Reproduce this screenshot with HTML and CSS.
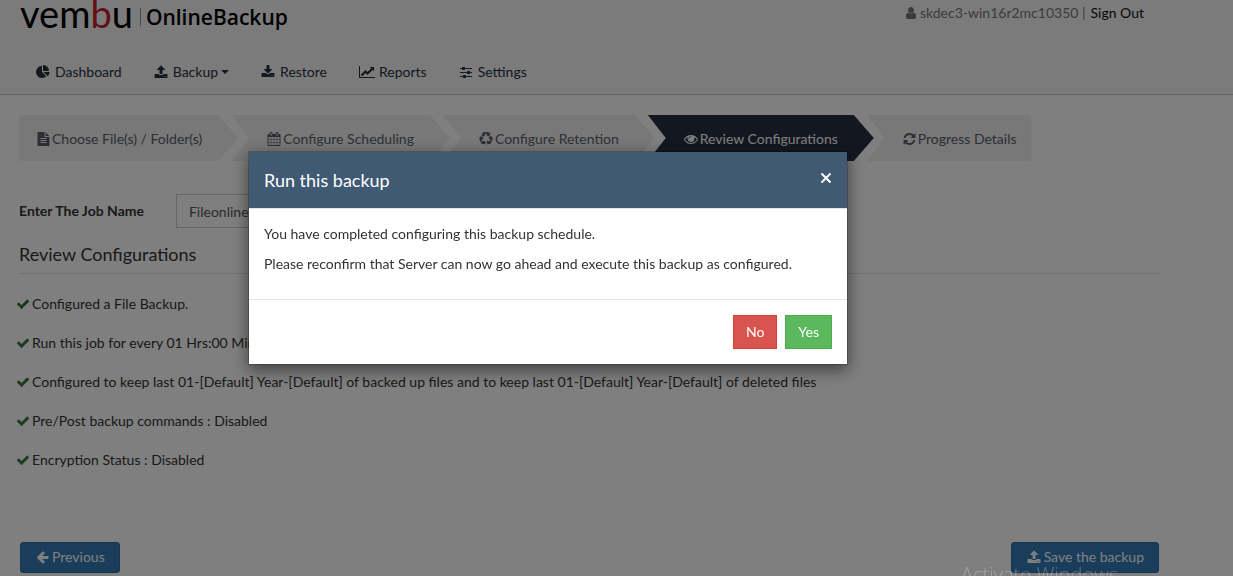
FILE: index.html
```html
<!DOCTYPE html>
<html lang="en">
<head>
    <meta charset="UTF-8">
    <meta name="viewport" content="width=device-width, initial-scale=1.0">
    <title>Vembu OnlineBackup</title>
    <link rel="stylesheet" href="styles.css">
</head>
<body>
    <!-- Icon sprite -->
    <svg class="sprite" aria-hidden="true">
        <symbol id="icon-pie" viewBox="0 0 1792 1792"><path d="M768 890l546 546q-106 108-247.5 168t-298.5 60q-209 0-385.5-103t-279.5-279.5-103-385.5 103-385.5 279.5-279.5 385.5-103v762zm187 6h773q0 157-60 298.5t-168 247.5zm709-128h-768v-768q209 0 385.5 103t279.5 279.5 103 385.5z"/></symbol>
        <symbol id="icon-upload" viewBox="0 0 1792 1792"><path d="M1344 1472q0-26-19-45t-45-19-45 19-19 45 19 45 45 19 45-19 19-45zm256 0q0-26-19-45t-45-19-45 19-19 45 19 45 45 19 45-19 19-45zm128-224v320q0 40-28 68t-68 28h-1472q-40 0-68-28t-28-68v-320q0-40 28-68t68-28h427q21 56 70.5 92t110.5 36h256q61 0 110.5-36t70.5-92h427q40 0 68 28t28 68zm-325-648q-17 40-59 40h-256v448q0 26-19 45t-45 19h-256q-26 0-45-19t-19-45v-448h-256q-42 0-59-40-17-39 14-69l448-448q18-19 45-19t45 19l448 448q31 30 14 69z"/></symbol>
        <symbol id="icon-download" viewBox="0 0 1792 1792"><path d="M1344 1344q0-26-19-45t-45-19-45 19-19 45 19 45 45 19 45-19 19-45zm256 0q0-26-19-45t-45-19-45 19-19 45 19 45 45 19 45-19 19-45zm128-224v320q0 40-28 68t-68 28h-1472q-40 0-68-28t-28-68v-320q0-40 28-68t68-28h465l135 136q58 56 136 56t136-56l136-136h464q40 0 68 28t28 68zm-325-569q17 41-14 70l-448 448q-18 19-45 19t-45-19l-448-448q-31-29-14-70 17-39 59-39h256v-448q0-26 19-45t45-19h256q26 0 45 19t19 45v448h256q42 0 59 39z"/></symbol>
        <symbol id="icon-chart" viewBox="0 0 2048 1792"><path d="M2048 1536v128h-2048v-1536h128v1408h1920zm-128-1248v435q0 21-19.5 29.5t-35.5-7.5l-121-121-633 633q-10 10-23 10t-23-10l-233-233-416 416-192-192 585-585q10-10 23-10t23 10l233 233 464-464-121-121q-16-16-7.5-35.5t29.5-19.5h435q14 0 23 9t9 23z"/></symbol>
        <symbol id="icon-sliders" viewBox="0 0 1536 1792"><path d="M352 1408v128h-352v-128h352zm352-128q26 0 45 19t19 45v256q0 26-19 45t-45 19h-256q-26 0-45-19t-19-45v-256q0-26 19-45t45-19h256zm160-384v128h-864v-128h864zm-640-512v128h-224v-128h224zm1312 1024v128h-736v-128h736zm-960-1152q26 0 45 19t19 45v256q0 26-19 45t-45 19h-256q-26 0-45-19t-19-45v-256q0-26 19-45t45-19h256zm640 512q26 0 45 19t19 45v256q0 26-19 45t-45 19h-256q-26 0-45-19t-19-45v-256q0-26 19-45t45-19h256zm320 128v128h-224v-128h224zm0-512v128h-864v-128h864z"/></symbol>
        <symbol id="icon-user" viewBox="256 0 1280 1792"><path d="M1536 1399q0 109-62.5 187t-150.5 78h-854q-88 0-150.5-78t-62.5-187q0-85 8.5-160.5t31.5-152 58.5-131 94-89 134.5-34.5q131 128 313 128t313-128q76 0 134.5 34.5t94 89 58.5 131 31.5 152 8.5 160.5zm-256-887q0 159-112.5 271.5t-271.5 112.5-271.5-112.5-112.5-271.5 112.5-271.5 271.5-112.5 271.5 112.5 112.5 271.5z"/></symbol>
        <symbol id="icon-file" viewBox="128 0 1536 1792"><path d="M1596 476q14 14 28 36h-472v-472q22 14 36 28zm-476 164h544v1056q0 40-28 68t-68 28h-1344q-40 0-68-28t-28-68v-1600q0-40 28-68t68-28h800v544q0 40 28 68t68 28zm160 736v-64q0-14-9-23t-23-9h-704q-14 0-23 9t-9 23v64q0 14 9 23t23 9h704q14 0 23-9t9-23zm0-256v-64q0-14-9-23t-23-9h-704q-14 0-23 9t-9 23v64q0 14 9 23t23 9h704q14 0 23-9t9-23zm0-256v-64q0-14-9-23t-23-9h-704q-14 0-23 9t-9 23v64q0 14 9 23t23 9h704q14 0 23-9t9-23z"/></symbol>
        <symbol id="icon-calendar" viewBox="0 0 1792 1792"><path d="M192 1664h288v-288h-288v288zm352 0h320v-288h-320v288zm-352-352h288v-320h-288v320zm352 0h320v-320h-320v320zm-352-384h288v-288h-288v288zm736 736h320v-288h-320v288zm-384-736h320v-288h-320v288zm768 736h288v-288h-288v288zm-384-352h320v-320h-320v320zm-352-864v-288q0-13-9.5-22.5t-22.5-9.5h-64q-13 0-22.5 9.5t-9.5 22.5v288q0 13 9.5 22.5t22.5 9.5h64q13 0 22.5-9.5t9.5-22.5zm736 864h288v-320h-288v320zm-384-384h320v-288h-320v288zm384 0h288v-288h-288v288zm32-480v-288q0-13-9.5-22.5t-22.5-9.5h-64q-13 0-22.5 9.5t-9.5 22.5v288q0 13 9.5 22.5t22.5 9.5h64q13 0 22.5-9.5t9.5-22.5zm384-64v1280q0 52-38 90t-90 38h-1408q-52 0-90-38t-38-90v-1280q0-52 38-90t90-38h128v-96q0-66 47-113t113-47h64q66 0 113 47t47 113v96h384v-96q0-66 47-113t113-47h64q66 0 113 47t47 113v96h128q52 0 90 38t38 90z"/></symbol>
        <symbol id="icon-recycle" viewBox="0 0 1792 1792"><path d="M836 1169l-15 368-2 22-420-29q-36-3-67-31.5t-47-65.5q-11-27-14.5-55t4-65 12-55 21.5-64 19-53q78 12 509 28zm-387-586l180 379-147-92q-63 72-111.5 144.5t-72.5 125-39.5 94.5-18.5 63l-4 21-190-357q-17-26-18-56t6-47l8-18q35-63 114-188l-140-86zm1231 517l-188 359q-12 29-36.5 46.5t-43.5 20.5l-18 4q-71 7-219 12l8 164-230-367 211-362 7 173q170 16 283 5t170-33zm-785-924q-47 63-265 435l-317-187-19-12 225-356q20-31 60-45t80-10q24 2 48.5 12t42 21 41.5 33 36 34.5 36 39.5 32 35zm655 307l212 363q18 37 12.5 76t-27.5 74q-13 20-33 37t-38 28-48.5 22-47 16-51.5 14-46 12q-34-72-265-436l313-195zm-143-226l142-83-220 373-419-20 151-86q-34-89-75-166t-75.5-123.5-64.5-80-47-46.5l-17-13 405 1q31-3 58 10.5t39 28.5l11 15q39 61 112 190z"/></symbol>
        <symbol id="icon-eye" viewBox="0 0 1792 1792"><path d="M1664 960q-152-236-381-353 61 104 61 225 0 185-131.5 316.5t-316.5 131.5-316.5-131.5-131.5-316.5q0-121 61-225-229 117-381 353 133 205 333.5 326.5t434.5 121.5 434.5-121.5 333.5-326.5zm-720-384q0-20-14-34t-34-14q-125 0-214.5 89.5t-89.5 214.5q0 20 14 34t34 14 34-14 14-34q0-86 61-147t147-61q20 0 34-14t14-34zm848 384q0 34-20 69-140 230-376.5 368.5t-499.5 138.5-499.5-139-376.5-368q-20-35-20-69t20-69q140-229 376.5-368t499.5-139 499.5 139 376.5 368q20 35 20 69z"/></symbol>
        <symbol id="icon-refresh" viewBox="128 0 1536 1792"><path d="M1639 1056q0 5-1 7-64 268-268 434.5t-478 166.5q-146 0-282.5-55t-243.5-157l-129 129q-19 19-45 19t-45-19-19-45v-448q0-26 19-45t45-19h448q26 0 45 19t19 45-19 45l-137 137q71 66 161 102t187 36q134 0 250-65t186-179q11-17 53-117 8-23 30-23h192q13 0 22.5 9.5t9.5 22.5zm25-800v448q0 26-19 45t-45 19h-448q-26 0-45-19t-19-45 19-45l138-138q-148-137-349-137-134 0-250 65t-186 179q-11 17-53 117-8 23-30 23h-199q-13 0-22.5-9.5t-9.5-22.5v-7q65-268 270-434.5t480-166.5q146 0 284 55.5t245 156.5l130-129q19-19 45-19t45 19 19 45z"/></symbol>
        <symbol id="icon-check" viewBox="64 0 1664 1792"><path d="M1671 566q0 40-28 68l-724 724-136 136q-28 28-68 28t-68-28l-136-136-362-362q-28-28-28-68t28-68l136-136q28-28 68-28t68 28l294 295 656-657q28-28 68-28t68 28l136 136q28 28 28 68z"/></symbol>
        <symbol id="icon-left" viewBox="128 0 1536 1792"><path d="M1664 896v128q0 53-32.5 90.5t-84.5 37.5h-704l293 294q38 36 38 90t-38 90l-75 76q-37 37-90 37-52 0-91-37l-651-652q-37-37-37-90 0-52 37-91l651-650q38-38 91-38 52 0 90 38l75 74q38 38 38 91t-38 91l-293 293h704q52 0 84.5 37.5t32.5 90.5z"/></symbol>
        <symbol id="icon-close" viewBox="0 0 12 12"><path d="M1.500 1.500l9 9M10.500 1.500l-9 9" fill="none" stroke="currentColor" stroke-width="2"/></symbol>
    </svg>

    <header class="site-header">
        <div class="top-bar">
            <a href="#" class="logo">
                <span class="logo-brand">vem<span class="logo-accent">b</span>u</span>
                <span class="logo-product">OnlineBackup</span>
            </a>
            <div class="account">
                <svg class="icon icon-narrow"><use href="#icon-user"/></svg>
                <span>skdec3-win16r2mc10350 |</span>
                <a href="#" class="sign-out">Sign Out</a>
            </div>
        </div>
        <nav class="main-nav">
            <a href="#"><svg class="icon"><use href="#icon-pie"/></svg>Dashboard</a>
            <a href="#"><svg class="icon"><use href="#icon-upload"/></svg>Backup<span class="caret"></span></a>
            <a href="#"><svg class="icon"><use href="#icon-download"/></svg>Restore</a>
            <a href="#"><svg class="icon icon-wide"><use href="#icon-chart"/></svg>Reports</a>
            <a href="#"><svg class="icon"><use href="#icon-sliders"/></svg>Settings</a>
        </nav>
    </header>

    <main class="content">
        <nav class="steps">
            <a href="#" class="step"><svg class="icon icon-mid"><use href="#icon-file"/></svg>Choose File(s) / Folder(s)</a>
            <a href="#" class="step"><svg class="icon"><use href="#icon-calendar"/></svg>Configure Scheduling</a>
            <a href="#" class="step"><svg class="icon"><use href="#icon-recycle"/></svg>Configure Retention</a>
            <a href="#" class="step active"><svg class="icon"><use href="#icon-eye"/></svg>Review Configurations</a>
            <a href="#" class="step"><svg class="icon icon-mid"><use href="#icon-refresh"/></svg>Progress Details</a>
        </nav>

        <div class="job-row">
            <label for="jobName">Enter The Job Name</label>
            <input type="text" id="jobName" class="job-input" value="Fileonline">
        </div>

        <h2 class="section-title">Review Configurations</h2>

        <ul class="review-list">
            <li><svg class="icon"><use href="#icon-check"/></svg>Configured a File Backup.</li>
            <li><svg class="icon"><use href="#icon-check"/></svg>Run this job for every 01 Hrs:00 Min</li>
            <li><svg class="icon"><use href="#icon-check"/></svg>Configured to keep last 01-[Default] Year-[Default] of backed up files and to keep last 01-[Default] Year-[Default] of deleted files</li>
            <li><svg class="icon"><use href="#icon-check"/></svg>Pre/Post backup commands : Disabled</li>
            <li><svg class="icon"><use href="#icon-check"/></svg>Encryption Status : Disabled</li>
        </ul>

        <div class="page-actions">
            <button type="button" class="btn-primary"><svg class="icon icon-mid"><use href="#icon-left"/></svg>Previous</button>
            <button type="button" class="btn-primary"><svg class="icon"><use href="#icon-upload"/></svg>Save the backup</button>
        </div>
    </main>

    <div class="backdrop">
        <div class="modal" role="dialog" aria-labelledby="modalTitle">
            <div class="modal-header">
                <h4 id="modalTitle">Run this backup</h4>
                <button type="button" class="close" aria-label="Close"><svg><use href="#icon-close"/></svg></button>
            </div>
            <div class="modal-body">
                <p>You have completed configuring this backup schedule.</p>
                <p>Please reconfirm that Server can now go ahead and execute this backup as configured.</p>
            </div>
            <div class="modal-footer">
                <button type="button" class="btn btn-danger">No</button>
                <button type="button" class="btn btn-success">Yes</button>
            </div>
        </div>
    </div>

    <div class="watermark">Activate Windows</div>
</body>
</html>
```
FILE: styles.css
```css
:root {
    --header-bg: #f6f6f6;
    --text-color: #333333;
    --nav-color: #27313f;
    --step-bg: #f0f0f0;
    --step-active: #263040;
    --modal-blue: #405a73;
    --primary: #337ab7;
}

* {
    box-sizing: border-box;
}

body {
    margin: 0;
    overflow: hidden; /* page does not scroll behind the dialog */
    background: #ffffff;
    color: var(--text-color);
    font-family: Lato, "Liberation Sans", sans-serif;
    font-size: 14px;
    line-height: 20px;
}

a {
    color: inherit;
    text-decoration: none;
}

button,
input {
    font: inherit;
}

.sprite {
    position: absolute;
    width: 0;
    height: 0;
}

.icon {
    width: 14px;
    height: 14px;
    flex: none;
    fill: currentColor;
}

.icon-narrow {
    width: 12px;
}

.icon-mid {
    width: 13px;
}

.icon-wide {
    width: 16px;
}

/* Header */
.site-header {
    padding: 0 89px 12px 20px;
    background: var(--header-bg);
    border-bottom: 1px solid #cccccc;
}

.top-bar {
    display: flex;
    justify-content: space-between;
    height: 62px;
}

.logo {
    display: flex;
    height: 34px;
    color: #000000;
}

.logo-brand {
    font-size: 38px;
    line-height: 26px;
}

.logo-accent {
    color: #c8202f;
}

.logo-product {
    align-self: center;
    margin-left: 7px;
    padding-left: 5px;
    border-left: 1px solid #999999;
    font-family: "Open Sans", "Noto Sans", sans-serif;
    font-size: 21px;
    font-weight: 600;
    line-height: 18px;
}

.account {
    display: flex;
    align-items: center;
    gap: 3px;
    height: 26px;
    color: #777777;
}

.sign-out {
    margin-left: 2px;
    color: #111111;
}

.main-nav {
    display: flex;
    gap: 32px;
    padding-left: 16px;
    color: var(--nav-color);
}

.main-nav a {
    display: flex;
    align-items: center;
}

.main-nav .icon {
    margin-right: 5px;
}

.main-nav .icon-wide {
    margin-right: 4px;
}

.caret {
    margin-left: 3px;
    border-top: 4px solid;
    border-right: 4px solid transparent;
    border-left: 4px solid transparent;
}

/* Wizard steps */
.content {
    padding: 20px 73px 0 19px;
}

.steps {
    display: flex;
}

.step {
    display: flex;
    align-items: center;
    gap: 2px;
    height: 46px;
    padding: 2px 36px 0;
    margin-left: -7px;
    background: var(--step-bg);
    color: #58606b;
    clip-path: polygon(0 0, calc(100% - 20px) 0, 100% 50%, calc(100% - 20px) 100%, 0 100%, 18px 50%);
}

.step:first-child {
    margin-left: 0;
    padding-left: 18px;
    border-radius: 3px 0 0 3px;
    clip-path: polygon(0 0, calc(100% - 20px) 0, 100% 50%, calc(100% - 20px) 100%, 0 100%);
}

.step:last-child {
    padding-right: 15px;
    border-radius: 0 3px 3px 0;
    clip-path: polygon(0 0, 100% 0, 100% 100%, 0 100%, 18px 50%);
}

.step.active {
    background: var(--step-active);
    color: #ffffff;
}

/* Job name and summary */
.job-row {
    display: flex;
    align-items: center;
    gap: 32px;
    margin-top: 33px;
}

.job-row label {
    font-weight: 700;
}

.job-input {
    width: 240px;
    height: 34px;
    padding: 6px 12px;
    border: 1px solid #cccccc;
    background: #ffffff;
    color: #555555;
}

.section-title {
    margin: 15px 0 0;
    padding-bottom: 8px;
    border-bottom: 1px solid #e5e5e5;
    font-size: 18px;
    font-weight: 400;
    line-height: 22px;
}

.review-list {
    display: flex;
    flex-direction: column;
    gap: 19px;
    margin: 20px 0 0 -3px;
    padding: 0;
    list-style: none;
}

.review-list li {
    display: flex;
    align-items: center;
    gap: 2px;
}

.review-list .icon {
    fill: #3c763d;
}

.page-actions {
    display: flex;
    justify-content: space-between;
    margin-top: 72px;
    padding: 0 1px;
}

.btn-primary {
    display: flex;
    align-items: center;
    gap: 3px;
    padding: 4px 14px 5px 15px;
    border: 1px solid #2e6da4;
    border-radius: 3px;
    background: var(--primary);
    color: #ffffff;
}

/* Dialog */
.backdrop {
    position: fixed;
    inset: 0;
    display: flex;
    align-items: flex-start;
    justify-content: center;
    padding: 151px 137px 0 0;
    background: rgba(0, 0, 0, 0.5);
}

.modal {
    width: 100%;
    max-width: 600px;
    border: 1px solid rgba(0, 0, 0, 0.2);
    background: #ffffff;
    background-clip: padding-box;
    box-shadow: 0 5px 15px rgba(0, 0, 0, 0.5);
}

.modal-header {
    display: flex;
    justify-content: space-between;
    padding: 15px;
    border-bottom: 1px solid #e5e5e5;
    background: var(--modal-blue);
    background-clip: padding-box;
    color: #ffffff;
}

.modal-header h4 {
    margin: 0;
    font-size: 18px;
    font-weight: 400;
    line-height: 26px;
}

.close {
    display: flex;
    align-items: center;
    height: 22px;
    padding: 0;
    border: 0;
    background: none;
    color: #ffffff;
    cursor: pointer;
}

.close svg {
    width: 12px;
    height: 12px;
}

.modal-body {
    padding: 15px;
}

.modal-body p {
    margin: 0 0 10px;
}

.modal-footer {
    display: flex;
    justify-content: flex-end;
    gap: 8px;
    padding: 15px;
    border-top: 1px solid #e5e5e5;
}

.btn {
    padding: 6px 12px;
    border: 1px solid;
    color: #ffffff;
    cursor: pointer;
}

.btn-danger {
    border-color: #d43f3a;
    background: #d9534f;
}

.btn-success {
    border-color: #4cae4c;
    background: #5cb85c;
}

/* System notice, cut off by the window edge */
.watermark {
    position: fixed;
    right: 115px;
    bottom: -13px;
    color: rgba(255, 255, 255, 0.28);
    font-family: "Open Sans", "Noto Sans", sans-serif;
    font-size: 20px;
    font-weight: 300;
    line-height: 28px;
    pointer-events: none;
}
```
